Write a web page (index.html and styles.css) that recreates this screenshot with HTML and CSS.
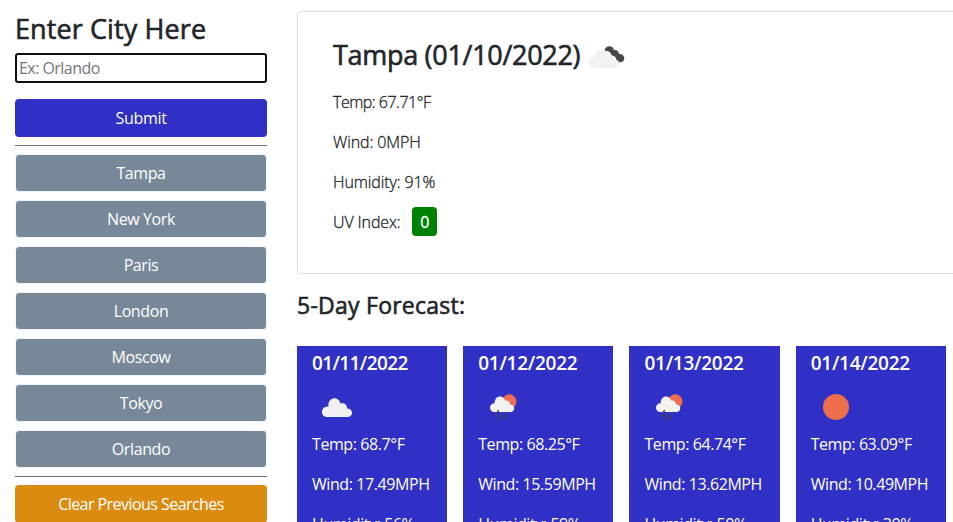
FILE: index.html
```html
<!DOCTYPE html>
<html lang="en">
<head>
<meta charset="utf-8">
<title>Weather Dashboard</title>
<link rel="stylesheet" href="styles.css">
</head>
<body>
<svg class="defs" width="0" height="0" aria-hidden="true">
  <defs>
    <symbol id="cloud" viewBox="0 0 30 20">
      <path d="M5.2 19C2.300 19 0 16.900 0 13.900C0 11 2.200 8.700 5.300 8.600C5.800 8.600 6.200 8.700 6.500 8.800C5.800 4 8.300 .3 12.300 .3C15.400 .3 17.800 2.400 18.400 5.500C21.400 4.300 25.200 6.100 25 10.500C28 10.400 30 12.300 30 14.700C30 17.200 28.200 19 25.700 19Z"/>
    </symbol>
    <symbol id="rain" viewBox="0 0 28 27">
      <circle class="sun" cx="19.300" cy="7.500" r="7.200"/>
      <path class="cloud" d="M4.300 18C1.900 18 0 16.200 0 13.700C0 11.300 1.900 9.300 4.600 9.300C4.800 5.200 6.700 2.600 10 2.600C12.600 2.600 14.400 4 15 6.600C17.500 5.800 20.100 7.400 20 10.500C22.500 10.500 24.300 12.200 24.300 14.300C24.300 16.500 22.700 18 20.500 18Z"/>
      <path class="drops" d="M8.300 16.700l-.8 1.700M6.700 20.500l-.8 1.500M11.300 20.300l-.8 1.300M16.300 18.500l-.8 1.500M9.700 23.500l-.8 1.500M14.500 22.800l-1 2"/>
    </symbol>
  </defs>
</svg>
<div class="page">
  <aside class="sidebar">
    <h3 class="search-title">Enter City Here</h3>
    <input class="search" type="text" placeholder="Ex: Orlando">
    <button class="btn submit">Submit</button>
    <hr>
    <button class="btn city">Tampa</button>
    <button class="btn city">New York</button>
    <button class="btn city">Paris</button>
    <button class="btn city">London</button>
    <button class="btn city">Moscow</button>
    <button class="btn city">Tokyo</button>
    <button class="btn city">Orlando</button>
    <hr>
    <button class="btn clear">Clear Previous Searches</button>
  </aside>
  <main class="main">
    <section class="current">
      <h3 class="current-title"><span>Tampa (01/10/2022)</span>
        <svg class="icon-now" viewBox="0 0 36 23">
          <path fill="#484848" d="M15.500 4C16.400 .3 20.800-.9 23.500 1.300C24.300 2 24.700 3 24.900 4C27.500 3.400 30 5.300 30 8C33.200 8 35.300 9.800 35.300 12.300C35.300 15 33 16.700 30.500 16.300L27.500 14.500C27.400 11.300 25.700 9.700 22.600 9.800C21.800 6.700 19.700 4.600 16.500 5.200Z"/>
          <path fill="#f2f2f2" d="M5.200 22C2.200 22 0 19.700 0 16.700C0 13.500 2.500 11.400 6 11.500C5.600 6.800 8.500 3.600 12.600 3.600C16 3.600 18.500 5.700 19.100 9C22.500 8 25.500 10.200 25.400 13.600C28.300 13.500 30.300 15.300 30.300 17.800C30.300 20.300 28.500 22 26 22Z"/>
        </svg>
      </h3>
      <p class="temp">Temp: 67.71°F</p>
      <p>Wind: 0MPH</p>
      <p>Humidity: 91%</p>
      <p>UV Index: <span class="uv">0</span></p>
    </section>
    <h4 class="forecast-title">5-Day Forecast:</h4>
    <section class="forecast">
      <article class="day">
        <h5>01/11/2022</h5>
        <div class="icon"><svg class="cloud-icon"><use href="#cloud"/></svg></div>
        <p>Temp: 68.7°F</p><p>Wind: 17.49MPH</p><p>Humidity: 56%</p>
      </article>
      <article class="day">
        <h5>01/12/2022</h5>
        <div class="icon"><svg class="rain-icon"><use href="#rain"/></svg></div>
        <p>Temp: 68.25°F</p><p>Wind: 15.59MPH</p><p>Humidity: 59%</p>
      </article>
      <article class="day">
        <h5>01/13/2022</h5>
        <div class="icon"><svg class="rain-icon"><use href="#rain"/></svg></div>
        <p>Temp: 64.74°F</p><p>Wind: 13.62MPH</p><p>Humidity: 50%</p>
      </article>
      <article class="day">
        <h5>01/14/2022</h5>
        <div class="icon"><span class="clear-icon"></span></div>
        <p>Temp: 63.09°F</p><p>Wind: 10.49MPH</p><p>Humidity: 30%</p>
      </article>
    </section>
  </main>
</div>
</body>
</html>
```

FILE: styles.css
```css
* { box-sizing: border-box; }
body {
  margin: 0;
  height: 522px;
  overflow: hidden;
  background: #fff;
  color: #212529;
  font: 400 16px/24px "Segoe UI", "Open Sans", "Noto Sans", sans-serif;
  letter-spacing: -0.3px;
}
h3, h4, h5, p { margin: 0; }
.defs { position: absolute; }
.page { display: flex; height: 522px; overflow: hidden; }
.sidebar {
  flex: none;
  width: 282px;
  padding: 12px 15px 0;
  display: flex;
  flex-direction: column;
}
.search-title, .current-title, .forecast-title { font-weight: 500; -webkit-text-stroke: 0.6px currentColor; }
.search-title { font-size: 27px; line-height: 34px; letter-spacing: 0.1px; white-space: nowrap; }
.search {
  flex: none;
  margin: 7px 0 16px;
  height: 30px;
  padding: 0 2px;
  border: 2px solid #101010;
  border-radius: 3px;
  outline: none;
  font: inherit;
  letter-spacing: -0.55px;
}
.search::placeholder { color: #757575; opacity: 1; }
.btn {
  flex: none;
  height: 38px;
  margin: 0 0 8px;
  padding: 0;
  border: 0;
  border-radius: 4px;
  color: #fff;
  font: inherit;
  letter-spacing: -0.4px;
}
.submit { background: #302fc6; letter-spacing: -0.3px; }
.city { background: #778899; border: 1px solid #f3f5f7; }
.clear { background: #da8b10; letter-spacing: -0.55px; }
hr { flex: none; width: 100%; height: 1px; margin: 0 0 8px; border: 0; background: #6c6c7c; }
.main { flex: none; width: 860px; padding: 11px 15px 0; }
.current {
  height: 263px;
  padding: 26px 35px 0;
  border: 1px solid #dfdfdf;
  border-radius: 4px;
}
.current-title {
  display: flex;
  align-items: center;
  height: 34px;
  margin-bottom: 18px;
  font-size: 27px;
  letter-spacing: -0.3px;
  white-space: nowrap;
}
.icon-now { width: 36px; height: 23px; margin: 4px 0 0 8.5px; }
.current p, .day p { margin-bottom: 16px; white-space: nowrap; }
.current p { font-weight: 300; letter-spacing: -0.1px; -webkit-text-stroke: 0.3px currentColor; }
.current .temp { letter-spacing: -0.5px; }
.uv {
  display: inline-block;
  height: 29px;
  margin: -3px 0 -2px 7.5px;
  padding: 3px 8px 0;
  border-radius: 4px;
  background: #008000;
  color: #fff;
  font-weight: 400;
}
.forecast-title { margin: 17px 0 27px; font-size: 23px; line-height: 28px; letter-spacing: 0.25px; }
.forecast { display: flex; gap: 16px; }
.day { flex: none; width: 150.22px; height: 240px; padding: 5px 15px 0; background: #302fc6; color: #fff; }
.day p { letter-spacing: -0.42px; }
.day h5 { font-size: 19px; line-height: 24px; font-weight: 600; letter-spacing: -0.25px; }
.day:first-child h5 { letter-spacing: -0.6px; }
.icon { display: flex; align-items: flex-start; height: 57px; }
.cloud-icon { width: 30px; height: 20px; margin: 23px 0 0 10px; fill: #f0f0f2; }
.rain-icon { width: 28px; height: 27px; margin: 19px 0 0 12px; }
.sun { fill: #ec6e4c; }
.cloud { fill: #f2f2f2; }
.drops { fill: none; stroke: #484848; stroke-width: 1.6; stroke-linecap: round; }
.clear-icon { width: 26px; height: 26px; margin: 19px 0 0 12px; border-radius: 50%; background: #ec6e4c; }
```
